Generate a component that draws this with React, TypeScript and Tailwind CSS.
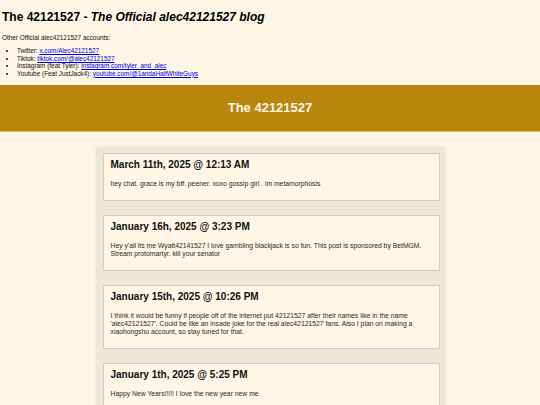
import React from "react";

const posts = [
  {
    date: "March 11th, 2025 @ 12:13 AM",
    text: "hey chat. grace is my bff. peener. xoxo gossip girl . im metamorphosis",
  },
  {
    date: "January 16h, 2025 @ 3:23 PM",
    text: "Hey y'all its me Wyatt42141527 I love gambling blackjack is so fun. This post is sponsored by BetMGM. Stream protomartyr. kill your senator",
  },
  {
    date: "January 15th, 2025 @ 10:26 PM",
    text: "I think it would be funny if people off of the internet put 42121527 after their names like in the name 'alec42121527'. Could be like an insade joke for the real alec42121527 fans. Also I plan on making a xiaohongshu account, so stay tuned for that.",
  },
  {
    date: "January 1th, 2025 @ 5:25 PM",
    text: "Happy New Years!!!!! I love the new year new me",
  },
];

const links = [
  { label: "Twitter: ", href: "x.com/Alec42121527" },
  { label: "Tiktok: ", href: "tiktok.com/@alec42121527" },
  { label: "Instagram (feat Tyler): ", href: "instagram.com/tyler_and_alec" },
  { label: "Youtube (Feat JustJack4): ", href: "youtube.com/@1andaHalfWhiteGuys" },
];

export default function App() {
  return (
    <div
      className="min-h-[405px] bg-[#fdf5e6] text-black"
      style={{ fontFamily: '"Liberation Sans", Arial, sans-serif' }}
    >
      <header className="px-[2px] pt-[10px]">
        <h1 className="text-[12px] font-bold leading-[14px]">
          The 42121527 - <em className="italic">The Official alec42121527 blog</em>
        </h1>
        <p className="mt-[10px] text-[6.4px] leading-[7.4px] text-[#111]">
          Other Official alec42121527 accounts:
        </p>
        <ul className="mt-[6px] list-disc pl-[15px] text-[6.4px] leading-[7.4px] text-[#111]">
          {links.map((l) => (
            <li key={l.href}>
              {l.label}
              <a href="#" className="text-[#0000ee] underline">
                {l.href}
              </a>
            </li>
          ))}
        </ul>
      </header>

      <div className="mt-[8px] flex h-[47px] items-center justify-center border-b border-[#d8b850] bg-[#b8860b]">
        <h2 className="text-[13px] font-bold text-[#fdf5e6]">The 42121527</h2>
      </div>

      <main className="mx-auto mt-[15px] flex w-[349px] flex-col gap-[14px] rounded-[3px] bg-[#ede7d7] pb-[20px] pl-[7px] pr-[5px] pt-[6px] shadow-[0_0_4px_rgba(0,0,0,0.08)]">
        {posts.map((p) => (
          <article
            key={p.date}
            className="rounded-[1px] border border-[#d2cdc2] bg-[#fdf5e6] px-[7px] pb-[12px] pt-[5px]"
          >
            <h3 className="text-[10px] font-bold leading-[12px] text-[#111]">{p.date}</h3>
            <p className="mt-[9px] text-[6.8px] leading-[8px] text-[#2a2a2a]">{p.text}</p>
          </article>
        ))}
      </main>
    </div>
  );
}
